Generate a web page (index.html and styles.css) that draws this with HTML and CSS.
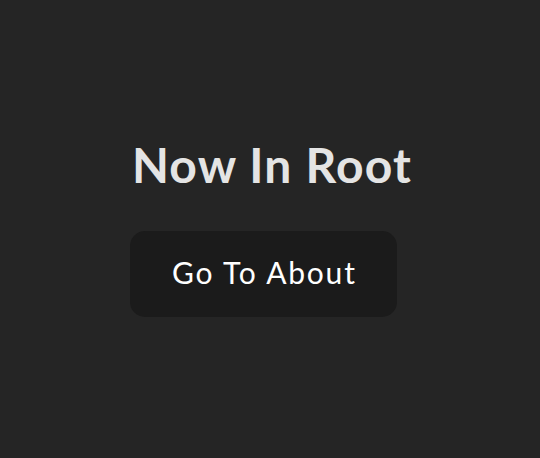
FILE: index.html
```html
<!DOCTYPE html>
<html>
<head>
<meta charset="utf-8">
<link rel="stylesheet" href="styles.css">
</head>
<body>
<div class="page">
  <div class="stack">
    <h1 class="title">Now In Root</h1>
    <button class="btn">Go To About</button>
  </div>
</div>
</body>
</html>
```
FILE: styles.css
```css
html, body {
  margin: 0;
  padding: 0;
  height: 100%;
  background: #252525;
}
.page {
  height: 100%;
  display: flex;
  justify-content: center;
  padding: 136px 0 0 2px;
  box-sizing: border-box;
  font-family: "Lato", "Liberation Sans", sans-serif;
}
.stack {
  display: flex;
  flex-direction: column;
  align-items: flex-start;
}
.title {
  margin: 0 0 0 2px;
  font-size: 48px;
  line-height: 58px;
  font-weight: 700;
  letter-spacing: 1.2px;
  color: #e4e4e4;
}
.btn {
  margin-top: 37px;
  width: 267px;
  height: 86px;
  border: none;
  border-radius: 15px;
  background: #1b1b1b;
  color: #ffffff;
  font-family: "Lato", "Liberation Sans", sans-serif;
  font-size: 30px;
  font-weight: 400;
  letter-spacing: 1.8px;
  padding: 0 0 4px 2px;
}
```
